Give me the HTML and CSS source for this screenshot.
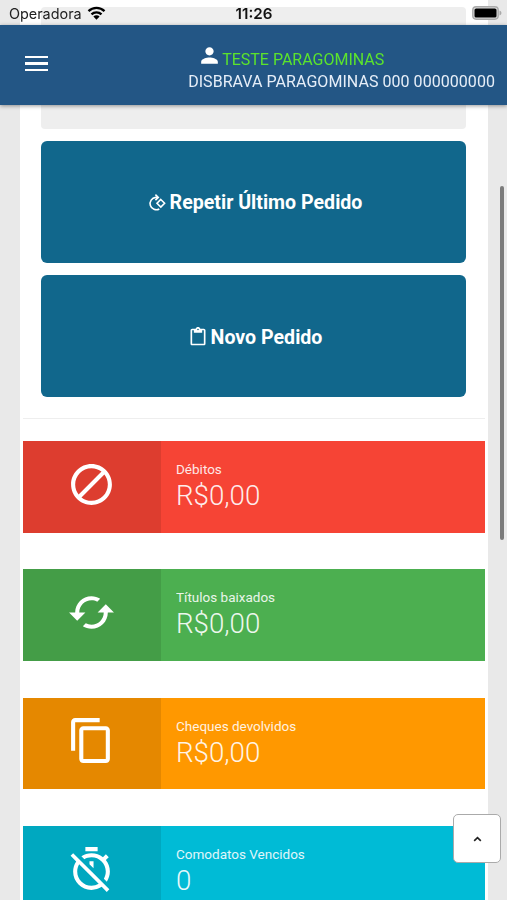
FILE: index.html
```html
<!DOCTYPE html>
<html lang="pt-BR">
<head>
  <meta charset="UTF-8" />
  <meta name="viewport" content="width=device-width, initial-scale=1" />
  <title>Pedidos</title>
  <link rel="stylesheet" href="styles.css">
</head>
<body>
  <div class="status-bar">
    <div class="carrier">
      <span>Operadora</span>
      <svg class="wifi" viewBox="0 0 18 14" aria-hidden="true">
        <path d="M1 5.2a11.5 11.5 0 0 1 16 0M4 8.4a7.2 7.2 0 0 1 10 0" fill="none" stroke="#000" stroke-width="2.3" />
        <path d="M5.9 10.5a4.4 4.4 0 0 1 6.2 0L9 13.7z" />
      </svg>
    </div>
    <span class="clock">11:26</span>
    <svg class="battery" viewBox="0 0 30 14" aria-hidden="true">
      <rect x=".8" y=".8" width="25.4" height="12.4" rx="3.4" fill="#ddd" stroke="#aaa" stroke-width="1.4" />
      <rect x="2.5" y="2.5" width="22" height="9" rx="1.6" />
      <path d="M27.5 4.6c2.6.8 2.6 4 0 4.8z" fill="#aaa" />
    </svg>
  </div>

  <header class="navbar">
    <button class="menu" aria-label="Menu"><span></span><span></span><span></span></button>
    <div class="user">
      <div class="user-name">
        <svg viewBox="0 0 24 24" aria-hidden="true"><path d="M12 12c2.21 0 4-1.79 4-4s-1.79-4-4-4-4 1.79-4 4 1.79 4 4 4zm0 2c-2.67 0-8 1.34-8 4v2h16v-2c0-2.66-5.33-4-8-4z" /></svg>
        <span>TESTE PARAGOMINAS</span>
      </div>
      <div class="company">DISBRAVA PARAGOMINAS 000 000000000</div>
    </div>
  </header>

  <main class="content">
    <div class="actions">
      <div class="placeholder"></div>
      <button class="action">
        <svg class="icon-repeat" viewBox="0 0 18 18" aria-hidden="true">
          <path d="M9.5 3.4H7.7a6.2 6.2 0 1 0 3.6 11.6" />
          <path d="M7.4.6l2.9 2.8-2.9 2.8M12.8 5.5l3.8 3.8-3.8 3.8L9 9.3z" />
        </svg>
        <span>Repetir Último Pedido</span>
      </button>
      <button class="action">
        <svg class="icon-clip" viewBox="0 0 24 24" aria-hidden="true"><path d="M19 2h-4.18C14.4.84 13.3 0 12 0c-1.3 0-2.4.84-2.82 2H5c-1.1 0-2 .9-2 2v16c0 1.1.9 2 2 2h14c1.1 0 2-.9 2-2V4c0-1.1-.9-2-2-2zm-7 0c.55 0 1 .45 1 1s-.45 1-1 1-1-.45-1-1 .45-1 1-1zm7 18H5V4h2v3h10V4h2v16z" /></svg>
        <span>Novo Pedido</span>
      </button>
    </div>

    <div class="info-list">
      <div class="info-box red">
        <div class="icon">
          <svg viewBox="0 0 24 24" aria-hidden="true"><path d="M12 2C6.48 2 2 6.48 2 12s4.48 10 10 10 10-4.48 10-10S17.52 2 12 2zM4 12c0-4.42 3.58-8 8-8 1.85 0 3.55.63 4.9 1.69L5.69 16.9C4.63 15.55 4 13.85 4 12zm8 8c-1.85 0-3.55-.63-4.9-1.69L18.31 7.1C19.37 8.45 20 10.15 20 12c0 4.42-3.58 8-8 8z" /></svg>
        </div>
        <div class="info">
          <div class="text">Débitos</div>
          <div class="number">R$0,00</div>
        </div>
      </div>

      <div class="info-box green">
        <div class="icon">
          <svg viewBox="0 0 24 24" aria-hidden="true"><path d="M19 8l-4 4h3c0 3.31-2.69 6-6 6-1.01 0-1.97-.25-2.8-.7l-1.46 1.46C8.97 19.54 10.43 20 12 20c4.42 0 8-3.58 8-8h3l-4-4zM6 12c0-3.31 2.69-6 6-6 1.01 0 1.97.25 2.8.7l1.46-1.46C15.03 4.46 13.57 4 12 4c-4.42 0-8 3.58-8 8H1l4 4 4-4H6z" /></svg>
        </div>
        <div class="info">
          <div class="text">Títulos baixados</div>
          <div class="number">R$0,00</div>
        </div>
      </div>

      <div class="info-box orange">
        <div class="icon">
          <svg viewBox="0 0 24 24" aria-hidden="true"><path d="M16 1H4c-1.1 0-2 .9-2 2v14h2V3h12V1zm3 4H8c-1.1 0-2 .9-2 2v14c0 1.1.9 2 2 2h11c1.1 0 2-.9 2-2V7c0-1.1-.9-2-2-2zm0 16H8V7h11v14z" /></svg>
        </div>
        <div class="info">
          <div class="text">Cheques devolvidos</div>
          <div class="number">R$0,00</div>
        </div>
      </div>

      <div class="info-box cyan">
        <div class="icon">
          <svg viewBox="0 0 24 24" aria-hidden="true"><path d="M19.04 4.55l-1.42 1.42C16.07 4.74 14.12 4 12 4c-1.83 0-3.53.55-4.95 1.48l1.46 1.46C9.53 6.35 10.73 6 12 6c3.87 0 7 3.13 7 7 0 1.27-.35 2.47-.94 3.49l1.45 1.45C20.45 16.53 21 14.83 21 13c0-2.12-.74-4.07-1.97-5.61l1.42-1.42-1.41-1.42zM15 1H9v2h6V1zm-4 8.44l2 2V8h-2v1.44zM3.02 4L1.75 5.27 4.5 8.03C3.55 9.45 3 11.16 3 13c0 4.97 4.02 9 9 9 1.84 0 3.55-.55 4.98-1.5l2.5 2.5 1.27-1.27-7.71-7.71L3.02 4zM12 20c-3.87 0-7-3.13-7-7 0-1.28.35-2.48.95-3.52l9.56 9.56c-1.03.61-2.23.96-3.51.96z" /></svg>
        </div>
        <div class="info">
          <div class="text">Comodatos Vencidos</div>
          <div class="number">0</div>
        </div>
      </div>
    </div>
  </main>

  <div class="scrollbar"></div>
  <button class="to-top" aria-label="Voltar ao topo">
    <svg viewBox="0 0 10 6" aria-hidden="true"><path d="M1.3 5L5 1.4 8.7 5" /></svg>
  </button>
</body>
</html>
```

FILE: styles.css
```css
* {
  box-sizing: border-box;
}
body {
  margin: 0;
  height: 900px;
  overflow: hidden;
  position: relative;
  background: #e9e9e9;
  font-family: Roboto, "Liberation Sans", sans-serif;
}
button {
  font-family: inherit;
  border: 0;
  padding: 0;
}

/* Barra de status */
.status-bar {
  position: fixed;
  top: 0;
  left: 0;
  z-index: 3;
  width: 100%;
  height: 26px;
  padding: 0 5px 0 9px;
  display: grid;
  grid-template-columns: 1fr auto 1fr;
  align-items: center;
  font-family: Inter, "Liberation Sans", sans-serif;
  font-size: 14.4px;
  color: #222;
}
.carrier {
  display: flex;
  align-items: center;
  gap: 5px;
}
.wifi {
  width: 19px;
  height: 14px;
}
.clock {
  margin-right: 3px;
  font-size: 15.2px;
  font-weight: 600;
  color: #111;
}
.battery {
  width: 30px;
  height: 14px;
  justify-self: end;
}

/* Topo */
.navbar {
  position: fixed;
  top: 25px;
  left: 0;
  z-index: 2;
  width: 100%;
  height: 80px;
  padding: 18px 12px 0 25px;
  display: flex;
  justify-content: space-between;
  align-items: flex-start;
  background: #235685;
  box-shadow: 0 1px 4px rgba(0, 0, 0, 0.4);
}
.menu {
  width: 23px;
  margin-top: 13px;
  display: flex;
  flex-direction: column;
  gap: 4px;
  background: none;
}
.menu span {
  height: 2.4px;
  background: #fff;
}
.user {
  font-size: 16px;
  line-height: 22px;
  color: #e6eef8;
}
.user-name {
  display: flex;
  height: 28px;
  padding-left: 9px;
  color: #5be32d;
}
.user-name span {
  padding-top: 6px;
}
.user-name svg {
  width: 25px;
  height: 25px;
  flex: none;
  fill: #fff;
}
.company {
  white-space: nowrap;
  letter-spacing: 0.05px;
}

/* Conteúdo */
.content {
  width: 468.5px;
  height: 900px;
  margin-left: 19.5px;
  padding: 7px 3px 0 3.5px;
  background: #fff;
  overflow: hidden;
}
.actions {
  display: flex;
  flex-direction: column;
  gap: 12.3px;
  padding: 0 19px 20.5px 18px;
  border-bottom: 1px solid #eee;
}
.placeholder {
  height: 121.7px;
  border-radius: 4px;
  background: #eee;
}
.action {
  display: flex;
  justify-content: center;
  align-items: center;
  height: 122px;
  padding: 2px 0 0 3px;
  border-radius: 6px;
  background: #11678c;
  color: #fff;
  font-size: 19.6px;
  font-weight: 700;
}
.icon-repeat {
  width: 18px;
  height: 18px;
  margin-right: 4px;
  fill: none;
  stroke: #fff;
  stroke-width: 1.6;
}
.icon-clip {
  width: 20px;
  height: 20px;
  margin-right: 3px;
  fill: #fff;
}

.info-list {
  display: flex;
  flex-direction: column;
  gap: 36.5px;
  padding-top: 22.2px;
}
.info-box {
  display: flex;
  flex: none;
  height: 91.8px;
  color: #fff;
}
.icon {
  display: flex;
  justify-content: center;
  align-items: center;
  width: 138px;
  padding: 0 1px 5px 0;
  background: rgba(0, 0, 0, 0.1);
}
.icon svg {
  width: 49px;
  height: 49px;
  fill: #fff;
}
.info {
  padding: 20px 0 0 15px;
}
.text {
  font-size: 13.5px;
  line-height: 17px;
  opacity: 0.88;
}
.number {
  padding-top: 1px;
  font-size: 27.7px;
  font-weight: 300;
  line-height: 34px;
  opacity: 0.9;
}
.red { background: #f64435; }
.green { background: #4caf50; }
.orange { background: #ff9800; }
.cyan { background: #00bbd6; }

/* Elementos flutuantes */
.scrollbar {
  position: fixed;
  top: 186px;
  right: 3px;
  width: 4px;
  height: 354px;
  border-radius: 2px;
  background: #7b7b7b;
}
.to-top {
  position: fixed;
  top: 814px;
  left: 453px;
  display: flex;
  justify-content: center;
  align-items: center;
  width: 48px;
  height: 49px;
  border: 1px solid #aaa;
  border-radius: 5px;
  background: #fff;
}
.to-top svg {
  width: 9px;
  height: 6px;
  fill: none;
  stroke: #222;
  stroke-width: 1.8;
}
```
